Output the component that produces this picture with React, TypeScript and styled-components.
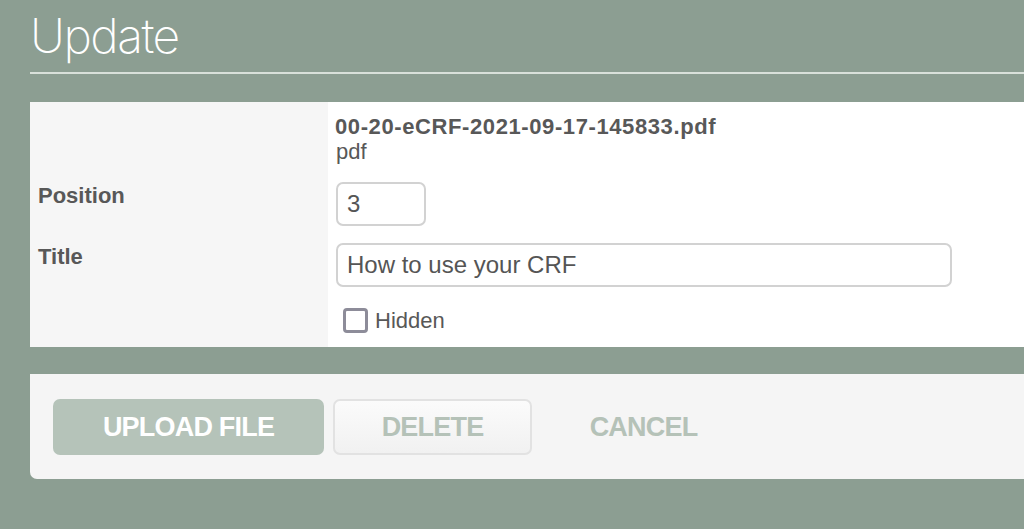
import React from "react";
import styled, { createGlobalStyle } from "styled-components";

const Global = createGlobalStyle`
  html, body { margin: 0; padding: 0; }
  body {
    background: #8c9e92;
    font-family: "Liberation Sans", Arial, sans-serif;
    overflow: hidden;
  }
`;

const Page = styled.div`
  padding-left: 30px;
  width: 994px;
`;

const Header = styled.header`
  border-bottom: 2px solid #d9e0da;
  height: 74px;
  box-sizing: border-box;
  display: flex;
  align-items: flex-end;
`;

const Heading = styled.h1`
  margin: 0 0 6px 0;
  font-family: Inter, "Liberation Sans", sans-serif;
  font-weight: 200;
  font-size: 48px;
  letter-spacing: -1.5px;
  line-height: 60px;
  color: #ffffff;
`;

const FormTable = styled.div`
  margin-top: 28px;
  display: grid;
  grid-template-columns: 298px 1fr;
  background: #ffffff;
`;

const LabelCell = styled.div`
  background: #f6f6f6;
  padding: 10px 8px 0 8px;
  font-weight: 700;
  font-size: 22px;
  line-height: 24px;
  color: #585858;
`;

const ValueCell = styled.div<{ $pt: number; $pb: number }>`
  padding: ${(p) => p.$pt}px 8px ${(p) => p.$pb}px 8px;
  color: #585858;
  font-size: 22px;
  line-height: 24px;
`;

const FileName = styled.div`
  font-weight: 700;
  font-size: 22px;
  line-height: 24px;
  letter-spacing: 0.6px;
  margin-left: -1px;
`;

const FileType = styled.div`
  font-size: 22px;
  line-height: 26px;
`;

const TextInput = styled.input<{ $w: number }>`
  display: block;
  box-sizing: border-box;
  width: ${(p) => p.$w}px;
  height: 44px;
  border: 2px solid #d2d2d2;
  border-radius: 7px;
  padding: 0 9px;
  font-family: "Liberation Sans", Arial, sans-serif;
  font-size: 24px;
  color: #555555;
  background: #ffffff;
  outline: none;
`;

const CheckRow = styled.label`
  display: flex;
  align-items: center;
  gap: 7px;
  padding-left: 7px;
  font-size: 22px;
  color: #585858;
`;

const Box = styled.input`
  appearance: none;
  margin: 0;
  width: 25px;
  height: 25px;
  box-sizing: border-box;
  border: 3px solid #8d8c99;
  border-radius: 4px;
  background: #ffffff;
`;

const Footer = styled.div`
  margin-top: 27px;
  height: 105px;
  box-sizing: border-box;
  background: #f5f5f5;
  border-radius: 0 0 0 7px;
  padding: 25px 23px;
  display: flex;
  gap: 9px;
`;

const Button = styled.button<{ $variant: "primary" | "outline" | "text"; $w: number }>`
  width: ${(p) => p.$w}px;
  height: 56px;
  box-sizing: border-box;
  border-radius: 7px;
  font-family: "Liberation Sans", Arial, sans-serif;
  font-weight: 700;
  font-size: 27px;
  letter-spacing: -0.8px;
  cursor: pointer;
  padding: 0;
  ${(p) =>
    p.$variant === "primary"
      ? `background: #b5c3b9; color: #ffffff; border: none;`
      : p.$variant === "outline"
      ? `background: linear-gradient(#fbfbfb, #f1f1f1); color: #b5c2b8; border: 2px solid #e2e2e2;`
      : `background: transparent; color: #b5c2b8; border: none;`}
`;

export default function App() {
  return (
    <>
      <Global />
      <Page>
        <Header>
          <Heading>Update</Heading>
        </Header>
        <FormTable>
          <LabelCell />
          <ValueCell $pt={13} $pb={9}>
            <FileName>00-20-eCRF-2021-09-17-145833.pdf</FileName>
            <FileType>pdf</FileType>
          </ValueCell>
          <LabelCell>Position</LabelCell>
          <ValueCell $pt={8} $pb={9}>
            <TextInput $w={90} readOnly value="3" />
          </ValueCell>
          <LabelCell>Title</LabelCell>
          <ValueCell $pt={8} $pb={9}>
            <TextInput $w={616} readOnly value="How to use your CRF" />
          </ValueCell>
          <LabelCell />
          <ValueCell $pt={12} $pb={14}>
            <CheckRow>
              <Box type="checkbox" />
              Hidden
            </CheckRow>
          </ValueCell>
        </FormTable>
        <Footer>
          <Button $variant="primary" $w={271}>UPLOAD FILE</Button>
          <Button $variant="outline" $w={199}>DELETE</Button>
          <Button $variant="text" $w={205}>CANCEL</Button>
        </Footer>
      </Page>
    </>
  );
}
